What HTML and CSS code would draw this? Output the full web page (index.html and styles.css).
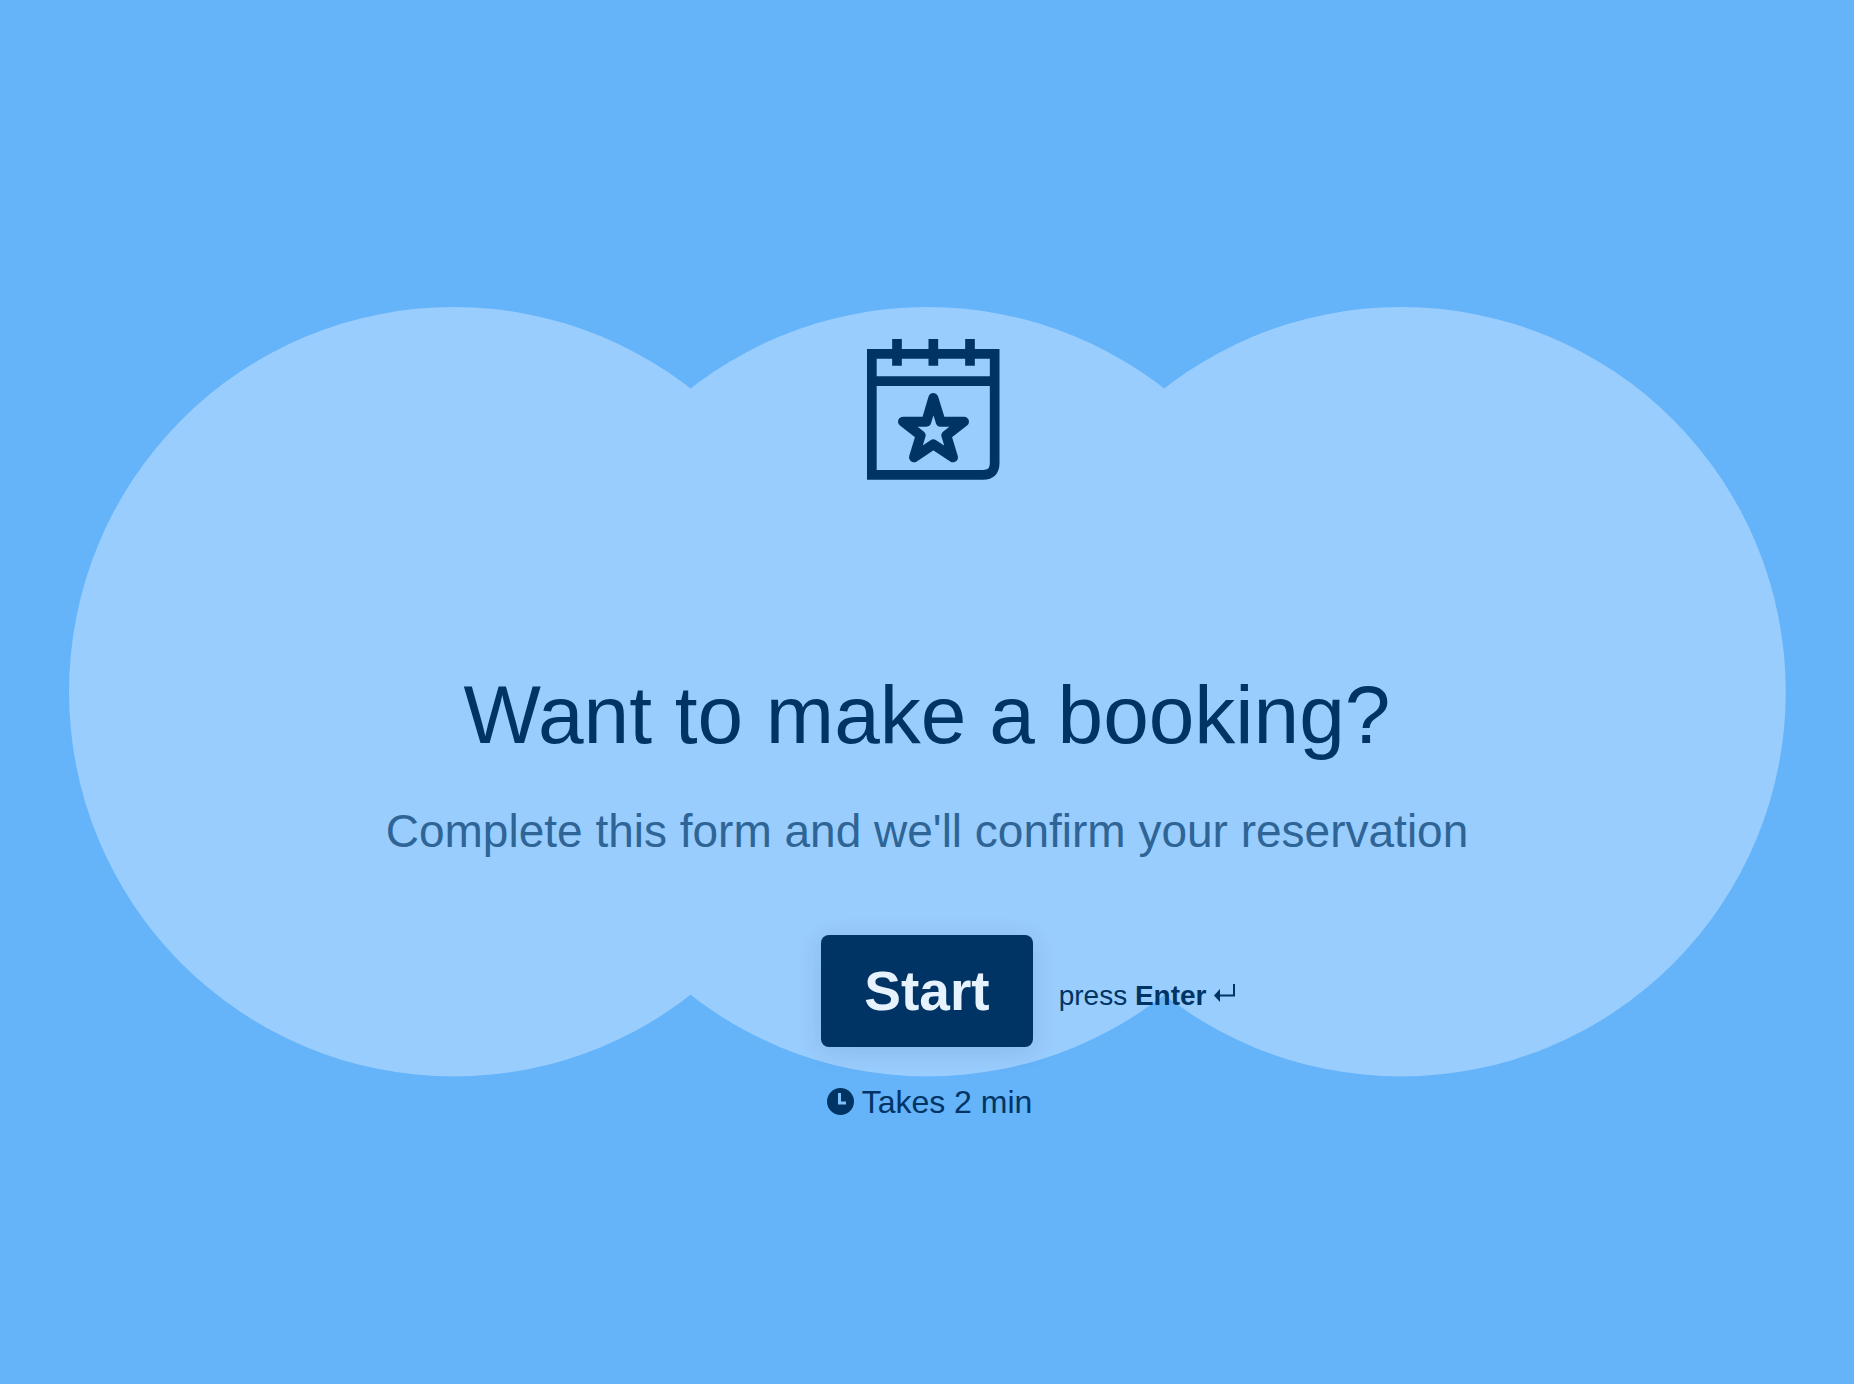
FILE: index.html
```html
<!DOCTYPE html>
<html lang="en">
<head>
  <meta charset="UTF-8">
  <meta name="viewport" content="width=device-width, initial-scale=1">
  <title>Want to make a booking?</title>
  <link rel="stylesheet" href="styles.css">
</head>
<body>

  <main class="welcome">
    <!-- Cloud behind the content -->
    <svg class="cloud" viewBox="0 0 1718 770" aria-hidden="true">
      <circle cx="385" cy="385" r="385" />
      <circle cx="859" cy="385" r="385" />
      <circle cx="1333" cy="385" r="385" />
    </svg>

    <div class="content">
      <svg class="calendar" viewBox="0 54 462 432" aria-hidden="true">
        <path d="M65.5 98.5H434V427Q434 461.5 399 461.5H65.5Z" />
        <path d="M65 180.5H434M141 54V134M250 54V134M360 54V134" />
        <path class="star" d="M250 231L272 302H342L289 343L309 409L250 370L192 409L212 343L159 302H229Z" />
      </svg>

      <h1 class="title">Want to make a booking?</h1>
      <p class="subtitle">Complete this form and we'll confirm your reservation</p>

      <div class="actions">
        <button class="start" type="button">Start</button>
        <div class="hint">
          <span>press <strong>Enter</strong></span>
          <svg class="enter" viewBox="0 0 22 18" aria-hidden="true">
            <path class="line" d="M5 11.5H20V0" />
            <path d="M0 11.5L6 5V18Z" />
          </svg>
        </div>
      </div>

      <div class="time">
        <svg class="clock" viewBox="0 0 32 28" aria-hidden="true">
          <circle cx="18.5" cy="13.5" r="13.5" />
          <path d="M17.5 5V15H24" />
        </svg>
        <span>Takes 2 min</span>
      </div>
    </div>
  </main>

</body>
</html>
```

FILE: styles.css
```css
* {
  box-sizing: border-box;
}

body {
  margin: 0;
  background: #65b3f9;
  font-family: "Liberation Sans", Arial, sans-serif;
  color: #003465;
}

/* cloud and content share one grid cell */
.welcome {
  display: grid;
  grid-template-columns: 100%;
  min-height: 100vh;
  align-items: center;
  justify-items: center;
}

.cloud,
.content {
  grid-area: 1 / 1;
}

.cloud {
  width: 92.6%;
  overflow: visible;
  fill: #99cdfd;
}

.content {
  width: 100%;
  display: flex;
  flex-direction: column;
  align-items: center;
  padding-top: 76px;
  text-align: center;
}

.calendar {
  width: 154px;
  height: 144px;
  fill: none;
  stroke: #003465;
  stroke-width: 29;
}

.calendar .star {
  stroke-width: 30;
  stroke-linejoin: round;
}

.title {
  margin: 184px 0 40px;
  font-size: 82px;
  line-height: 96px;
  font-weight: normal;
}

.subtitle {
  margin: 0 0 76px;
  font-size: 46px;
  line-height: 56px;
  color: #2e6596;
}

.actions {
  width: 100%;
  display: grid;
  grid-template-columns: 1fr auto 1fr;
  column-gap: 26px;
  align-items: center;
}

.start {
  grid-column: 2;
  height: 112px;
  padding: 0 43px;
  border: none;
  border-radius: 8px;
  background: #003465;
  color: #e6f3ff;
  font-family: inherit;
  font-size: 55px;
  font-weight: bold;
  cursor: pointer;
  box-shadow: 0 4px 24px rgba(0, 52, 101, 0.12);
}

.start:hover {
  background: #0a4277;
}

.hint {
  display: flex;
  align-items: center;
  gap: 8px;
  padding-top: 10px;
  font-size: 28px;
  line-height: 32px;
}

.enter {
  width: 22px;
  height: 18px;
  margin-bottom: 6px;
  fill: #003465;
}

.enter .line {
  fill: none;
  stroke: #003465;
  stroke-width: 2;
}

.time {
  display: flex;
  align-items: center;
  gap: 8px;
  margin-top: 35px;
  font-size: 32px;
  line-height: 40px;
}

.clock {
  width: 32px;
  height: 28px;
  fill: #003465;
}

.clock path {
  fill: none;
  stroke: #7fc0fa;
  stroke-width: 3;
}
```
